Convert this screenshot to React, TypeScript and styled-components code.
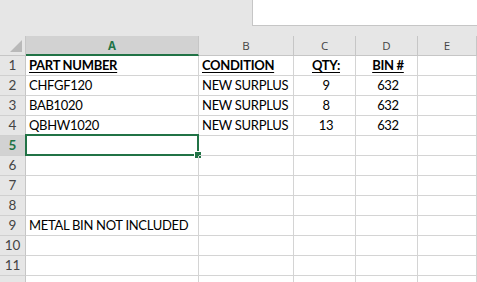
import React from 'react'
import styled, { createGlobalStyle, css } from 'styled-components'

const GREEN = '#217346'
const GRID = '#d4d4d4'

const GlobalStyle = createGlobalStyle`
  html, body {
    margin: 0;
    padding: 0;
    background: #ffffff;
    overflow: hidden;
  }
`

const Page = styled.div`
  width: 477px;
  height: 282px;
  overflow: hidden;
  background: #ffffff;
`

const TopBar = styled.div`
  height: 36px;
  background: #e6e6e6;
  display: flex;
  justify-content: flex-end;
  align-items: flex-start;
`

const FormulaBox = styled.div`
  width: 224px;
  height: 25px;
  background: #ffffff;
  border-left: 1px solid #c6c6c6;
  border-bottom: 1px solid #c6c6c6;
`

const Sheet = styled.div`
  display: grid;
  grid-template-columns: 26px 173px 95px 62px 62px 1fr;
  grid-auto-rows: 20px;
`

const Corner = styled.div`
  position: relative;
  background: #e6e6e6;
  border-right: 1px solid #c6c6c6;
  border-bottom: 1px solid #c6c6c6;
  box-sizing: border-box;
  &::after {
    content: '';
    position: absolute;
    right: 3px;
    bottom: 3px;
    width: 0;
    height: 0;
    border-left: 12px solid transparent;
    border-bottom: 12px solid #b9b9b9;
  }
`

const ColHeader = styled.div<{ $active?: boolean }>`
  box-sizing: border-box;
  background: #e6e6e6;
  border-right: 1px solid #c6c6c6;
  border-bottom: 1px solid #c6c6c6;
  display: flex;
  align-items: center;
  justify-content: center;
  font-family: 'Open Sans', 'Liberation Sans', sans-serif;
  font-size: 11.5px;
  color: #444444;
  ${p => p.$active && css`
    background: #d2d2d2;
    color: ${GREEN};
    font-weight: 700;
    border-bottom: 2px solid ${GREEN};
  `}
`

const RowHeader = styled.div<{ $active?: boolean }>`
  box-sizing: border-box;
  background: #e6e6e6;
  border-right: 1px solid #c6c6c6;
  border-bottom: 1px solid #d0d0d0;
  display: flex;
  align-items: flex-end;
  justify-content: center;
  padding-bottom: 1px;
  font-family: 'Lato', 'Liberation Sans', sans-serif;
  font-size: 13.5px;
  line-height: 18px;
  color: #444444;
  ${p => p.$active && css`
    background: #d2d2d2;
    color: ${GREEN};
    font-weight: 700;
  `}
`

const Cell = styled.div<{ $align?: 'left' | 'center'; $bold?: boolean }>`
  position: relative;
  box-sizing: border-box;
  border-right: 1px solid ${GRID};
  border-bottom: 1px solid ${GRID};
  display: flex;
  align-items: flex-end;
  justify-content: ${p => (p.$align === 'center' ? 'center' : 'flex-start')};
  padding: 0 0 1px 3px;
  font-family: 'Lato', 'Liberation Sans', sans-serif;
  font-size: 13px;
  letter-spacing: -0.3px;
  line-height: 18px;
  color: #000000;
  white-space: nowrap;
  ${p => p.$bold && css`
    font-weight: 700;
    text-decoration: underline;
    text-underline-offset: 2px;
  `}
`

const Selection = styled.div`
  position: absolute;
  left: -1px;
  top: -2px;
  right: -1px;
  bottom: -1px;
  border: 2px solid ${GREEN};
  pointer-events: none;
`

const FillHandle = styled.div`
  position: absolute;
  right: -5px;
  bottom: -5px;
  width: 6px;
  height: 6px;
  background: ${GREEN};
  border: 1px solid #ffffff;
`

type Row = { a?: string; b?: string; c?: string; d?: string; bold?: boolean }

const rows: Row[] = [
  { a: 'PART NUMBER', b: 'CONDITION', c: 'QTY:', d: 'BIN #', bold: true },
  { a: 'CHFGF120', b: 'NEW SURPLUS', c: '9', d: '632' },
  { a: 'BAB1020', b: 'NEW SURPLUS', c: '8', d: '632' },
  { a: 'QBHW1020', b: 'NEW SURPLUS', c: '13', d: '632' },
  {},
  {},
  {},
  {},
  { a: 'METAL BIN NOT INCLUDED' },
  {},
  {},
  {},
]

const columns = ['A', 'B', 'C', 'D', 'E']
const selectedRow = 5
const visibleRows = 11

export default function App() {
  return (
    <Page>
      <GlobalStyle />
      <TopBar>
        <FormulaBox />
      </TopBar>
      <Sheet>
        <Corner />
        {columns.map(c => (
          <ColHeader key={c} $active={c === 'A'}>{c}</ColHeader>
        ))}
        {rows.map((r, i) => {
          const n = i + 1
          return (
            <React.Fragment key={n}>
              <RowHeader $active={n === selectedRow}>{n <= visibleRows ? n : ''}</RowHeader>
              <Cell $bold={r.bold}>
                {r.a}
                {n === selectedRow && (
                  <Selection>
                    <FillHandle />
                  </Selection>
                )}
              </Cell>
              <Cell $bold={r.bold}>{r.b}</Cell>
              <Cell $align='center' $bold={r.bold}>{r.c}</Cell>
              <Cell $align='center' $bold={r.bold}>{r.d}</Cell>
              <Cell />
            </React.Fragment>
          )
        })}
      </Sheet>
    </Page>
  )
}
